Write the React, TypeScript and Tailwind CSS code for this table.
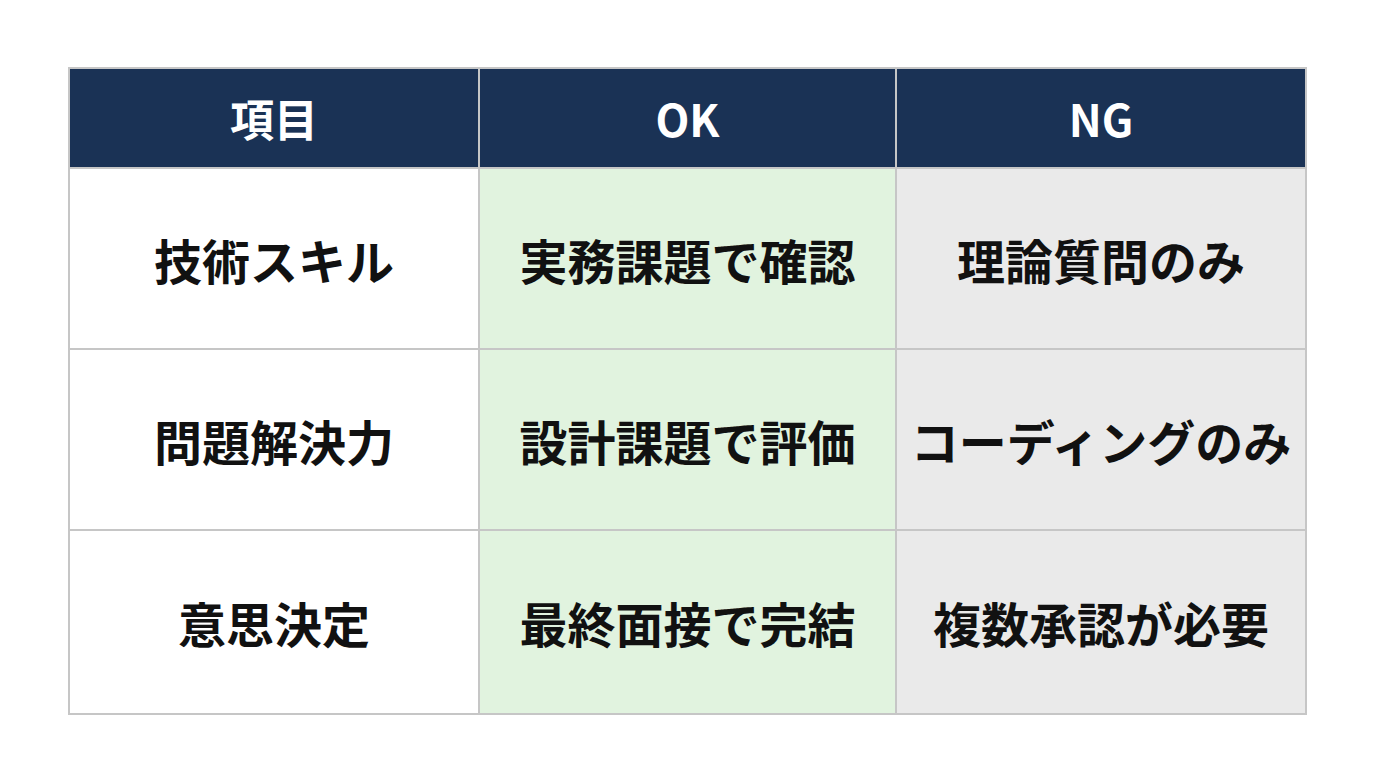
import React from "react";

const rows = [
  { item: "技術スキル", ok: "実務課題で確認", ng: "理論質問のみ" },
  { item: "問題解決力", ok: "設計課題で評価", ng: "コーディングのみ" },
  { item: "意思決定", ok: "最終面接で完結", ng: "複数承認が必要" },
];

const font = { fontFamily: '"Noto Sans CJK JP", "Noto Sans", sans-serif' };

const App = () => {
  return (
    <div className="w-[1376px] h-[768px] bg-white pt-[67px] pl-[68px]" style={font}>
      <div className="w-[1239px] grid grid-cols-[408px_415px_408px] gap-[2px] bg-[#c6c6c6] p-[2px]">
        {["項目", "OK", "NG"].map((h) => (
          <div
            key={h}
            className="h-[98px] bg-[#1a3255] flex items-center justify-center text-white text-[44px] font-bold"
          >
            {h}
          </div>
        ))}
        {rows.map((r, i) => (
          <React.Fragment key={r.item}>
            <div className={`${i === 2 ? "h-[182px]" : "h-[179px]"} bg-white flex items-center justify-center text-[#111] text-[48px] font-bold`}>
              {r.item}
            </div>
            <div className="bg-[#e1f3df] flex items-center justify-center text-[#111] text-[48px] font-bold">
              {r.ok}
            </div>
            <div className="bg-[#eaeaea] flex items-center justify-center text-[#111] text-[48px] font-bold">
              {r.ng}
            </div>
          </React.Fragment>
        ))}
      </div>
    </div>
  );
};

export default App;
